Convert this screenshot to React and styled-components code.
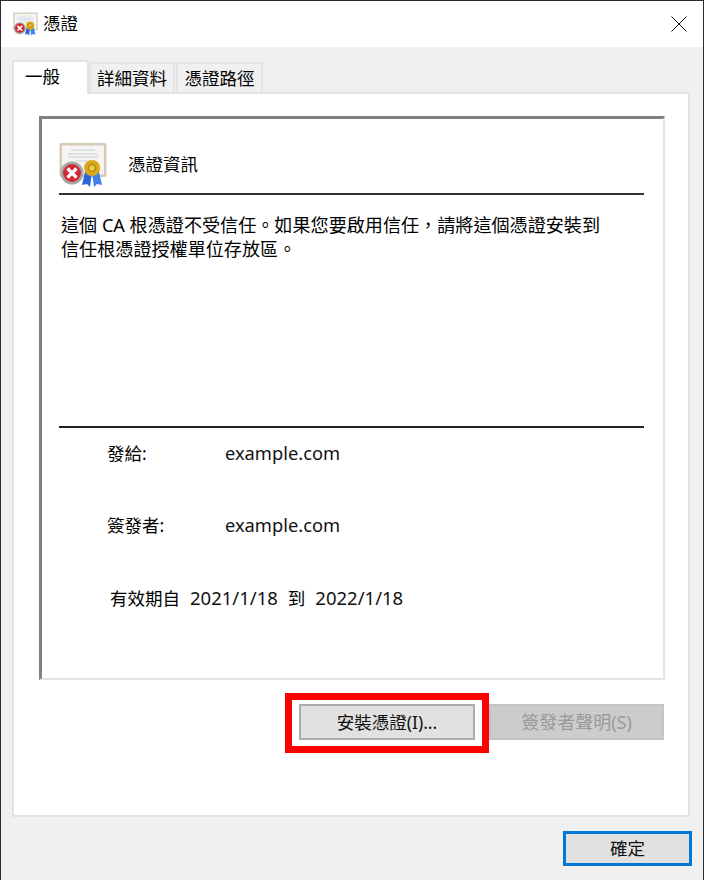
import styled, { createGlobalStyle } from "styled-components";

const GlobalStyle = createGlobalStyle`
  html, body {
    margin: 0;
    padding: 0;
    background: #fff;
  }
  * {
    box-sizing: border-box;
  }
`;

const Window = styled.div`
  width: 704px;
  height: 880px;
  display: flex;
  flex-direction: column;
  border-top: 1px solid #2b2b2b;
  border-left: 1px solid #2b2b2b;
  border-right: 1px solid #2b2b2b;
  background: #f0f0f0;
  color: #000;
  font-family: "Noto Sans", "Noto Sans CJK TC", sans-serif;
  font-size: 18.1px;
`;

const TitleBar = styled.header`
  height: 46px;
  flex: none;
  display: flex;
  align-items: center;
  padding: 0 16px 0 12px;
  background: #fff;
`;

const Title = styled.span`
  flex: 1;
  margin-left: 5px;
  padding-bottom: 3px;
  font-size: 17.5px;
  color: #000;
`;

const Body = styled.main`
  flex: 1;
  display: flex;
  flex-direction: column;
  padding: 13px 13px 0 11px;
`;

const TabList = styled.nav`
  height: 32px;
  display: flex;
  align-items: flex-end;
  position: relative;
  z-index: 1;
`;

const Tab = styled.div`
  width: ${(p) => p.$width}px;
  height: ${(p) => (p.$active ? 34 : 30)}px;
  margin-bottom: ${(p) => (p.$active ? -2 : 0)}px;
  margin-right: ${(p) => (p.$active ? 0 : 1)}px;
  display: flex;
  align-items: ${(p) => (p.$active ? "flex-start" : "center")};
  justify-content: center;
  padding: ${(p) => (p.$active ? "1px 16px 0 0" : "0")};
  background: ${(p) => (p.$active ? "#fff" : "#f0f0f0")};
  border: 2px solid #e3e3e3;
  border-bottom: none;
  font-size: 17.5px;
  line-height: 26px;
`;

const Panel = styled.section`
  height: 725px;
  display: flex;
  flex-direction: column;
  padding: 22px 23px 0 25px;
  background: #fff;
  border: 2px solid #e3e3e3;
`;

const Frame = styled.div`
  height: 564px;
  flex: none;
  display: flex;
  flex-direction: column;
  padding: 0 19px 0 17px;
  border-top: 3px solid #808080;
  border-left: 3px solid #808080;
  border-right: 2px solid #e3e3e3;
  border-bottom: 2px solid #e3e3e3;
`;

const CertHeader = styled.div`
  height: 76px;
  flex: none;
  display: flex;
  align-items: flex-end;
  padding-bottom: 3px;
  border-bottom: 2px solid #333;
`;

const CertTitle = styled.div`
  margin: 0 0 14px 21px;
  line-height: 24px;
  font-size: 17.5px;
`;

const Message = styled.p`
  height: 233px;
  flex: none;
  margin: 0;
  padding: 18px 20px 0 2px;
  line-height: 24px;
  border-bottom: 2px solid #222;
`;

const Details = styled.div`
  display: flex;
  flex-direction: column;
  gap: 24.5px;
  padding-left: 48px;
`;

const DetailRow = styled.div`
  height: 48px;
  display: flex;
  align-items: center;
`;

const Label = styled.span`
  width: 118px;
  flex: none;
  font-size: 17.5px;
`;

const Value = styled.span`
  font-size: 18.3px;
  color: #111;
`;

const ValidRow = styled(DetailRow)`
  padding-left: 3px;
  gap: 10px;
  font-size: 17.5px;
`;

const DateValue = styled.span`
  font-size: 18.5px;
  color: #111;
`;

const ButtonRow = styled.div`
  display: flex;
  justify-content: flex-end;
  gap: 14px;
  margin-top: 24px;
  padding-right: 1px;
`;

const Button = styled.div`
  width: ${(p) => p.$width}px;
  height: ${(p) => p.$height || 36}px;
  display: flex;
  align-items: center;
  justify-content: center;
  position: relative;
  padding-bottom: 2px;
  font-size: ${(p) => (p.$disabled ? 18 : 17.5)}px;
  background: ${(p) => (p.$disabled ? "#cccccc" : "#e1e1e1")};
  color: ${(p) => (p.$disabled ? "#9a9a9a" : "#111")};
  border: 2px solid ${(p) => (p.$disabled ? "#c4c4c4" : "#adadad")};
`;

const DefaultButton = styled(Button)`
  border: 3px solid #0078d7;
`;

const Highlight = styled.div`
  position: absolute;
  top: -13px;
  left: -16px;
  width: 204px;
  height: 60px;
  border: 7px solid #ff0000;
  pointer-events: none;
`;

const Footer = styled.footer`
  display: flex;
  justify-content: flex-end;
  margin: 14px -2px 0 0;
`;

function CertIcon({ size }) {
  return (
    <svg width={size} height={size} viewBox="0 0 48 48" style={{ flex: "none" }}>
      <rect x="0.5" y="1" width="47" height="34" rx="2" fill="#d6cbb6" />
      <rect x="3" y="3.5" width="42" height="29" fill="#f6f5f1" />
      <path d="M12 8h24M9 12h30M9 15h30M17 19h14" stroke="#c3cde0" strokeWidth="1.2" />
      <path d="M26 30l-3 13 5-1 3 3 2-15z" fill="#2a68d8" />
      <path d="M40 30l3 13-5-1-3 3-2-15z" fill="#3f82ea" />
      <circle cx="33" cy="26" r="8" fill="#dba818" />
      <circle cx="33" cy="26" r="4.4" fill="#b98a10" />
      <circle cx="33" cy="26" r="2.8" fill="#eec84a" />
      <circle cx="13" cy="31" r="11.5" fill="#a8a8a8" />
      <circle cx="13" cy="31" r="9" fill="#cf2a36" />
      <path d="M8.5 26.5l9 9M17.5 26.5l-9 9" stroke="#fff" strokeWidth="3.2" />
    </svg>
  );
}

function CloseIcon() {
  return (
    <svg width="16" height="16" viewBox="0 0 16 16">
      <path d="M0.5 0.5l15 15M15.5 0.5l-15 15" stroke="#111" strokeWidth="1" fill="none" />
    </svg>
  );
}

export default function App() {
  return (
    <>
      <GlobalStyle />
      <Window>
        <TitleBar>
          <CertIcon size={25} />
          <Title>憑證</Title>
          <CloseIcon />
        </TitleBar>
        <Body>
          <TabList>
            <Tab $active $width={77}>一般</Tab>
            <Tab $width={86}>詳細資料</Tab>
            <Tab $width={87}>憑證路徑</Tab>
          </TabList>
          <Panel>
            <Frame>
              <CertHeader>
                <CertIcon size={48} />
                <CertTitle>憑證資訊</CertTitle>
              </CertHeader>
              <Message>
                這個 CA 根憑證不受信任。如果您要啟用信任，請將這個憑證安裝到
                <br />
                信任根憑證授權單位存放區。
              </Message>
              <Details>
                <DetailRow>
                  <Label>發給:</Label>
                  <Value>example.com</Value>
                </DetailRow>
                <DetailRow>
                  <Label>簽發者:</Label>
                  <Value>example.com</Value>
                </DetailRow>
                <ValidRow>
                  <span>有效期自</span>
                  <DateValue>2021/1/18</DateValue>
                  <span>到</span>
                  <DateValue>2022/1/18</DateValue>
                </ValidRow>
              </Details>
            </Frame>
            <ButtonRow>
              <Button $width={176}>
                安裝憑證(I)...
                <Highlight />
              </Button>
              <Button $width={175} $disabled>簽發者聲明(S)</Button>
            </ButtonRow>
          </Panel>
          <Footer>
            <DefaultButton $width={129} $height={35}>確定</DefaultButton>
          </Footer>
        </Body>
      </Window>
    </>
  );
}
